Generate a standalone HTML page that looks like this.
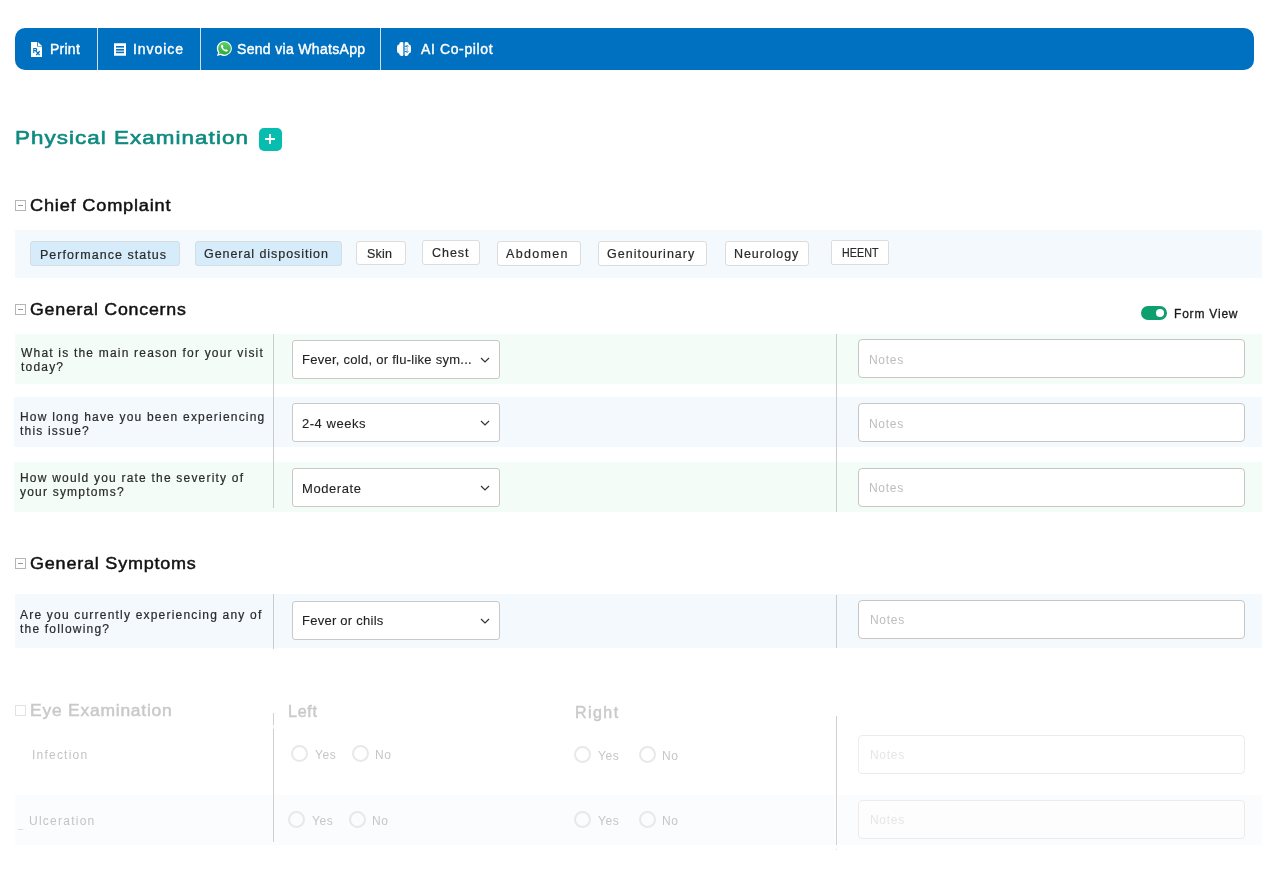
<!DOCTYPE html>
<html><head><meta charset="utf-8">
<style>
*{box-sizing:border-box;margin:0;padding:0}
html,body{width:1269px;height:893px;background:#fff;overflow:hidden;font-family:"Liberation Sans",sans-serif;position:relative}
.a{position:absolute;white-space:nowrap}
.t{position:absolute;white-space:nowrap;line-height:1;transform-origin:0 0}
/* toolbar */
#bar{position:absolute;left:15px;top:28px;width:1239px;height:42px;background:#0070c1;border-radius:10px}
.dv{position:absolute;top:28px;width:1px;height:42px;background:#d6dee9}
.bt{color:#fff;font-size:14px;font-weight:normal;-webkit-text-stroke:0.4px #fff;top:41.5px!important}
/* headings */
.h2{color:#0f8a80;font-size:19px;font-weight:normal;-webkit-text-stroke:0.6px #0f8a80}
.h3{color:#111;font-size:16px;font-weight:normal;-webkit-text-stroke:0.45px currentColor}
.box{position:absolute;width:11px;height:11px;border:1px solid #b5b5b5;background:#fff}
.box:after{content:"";position:absolute;left:2px;top:4px;width:5px;height:1px;background:#999}
/* tags */
.tagrow{position:absolute;left:15px;top:230px;width:1247px;height:48px;background:#f3f9fd}
.tag{position:absolute;height:25px;border:1px solid #dcdcdc;border-radius:3px;background:#fff}
.tag.on{background:#d6ecfb;border-color:#d4dde4}
.tg{color:#2a2a2a;font-size:12.5px;-webkit-text-stroke:0.2px #2a2a2a}
/* rows */
.row{position:absolute;height:50px;width:1248px}
.g{background:#f3fcf7}
.b{background:#f3f9fd}
.vd{position:absolute;width:1px;background:#cccccc}
.q{color:#2a2a2a;font-size:12px;letter-spacing:1.2px;-webkit-text-stroke:0.2px #2a2a2a}
.sel{position:absolute;left:292px;width:208px;height:39px;background:#fff;border:1px solid #c9c9c9;border-radius:3px}
.sv{color:#222;font-size:13px;-webkit-text-stroke:0.1px #222}
.chev{position:absolute;width:10px;height:7px}
.note{position:absolute;left:858px;width:387px;height:39px;background:#fff;border:1px solid #c6c6c6;border-radius:4px}
.nt{color:#bdbdbd;font-size:12px;letter-spacing:0.7px}
.rd{position:absolute;width:17px;height:17px;border:2px solid #e8e8e8;border-radius:50%}
.rt{color:#c6c6c6;font-size:12px;letter-spacing:0.6px}
</style></head><body><div id="root" style="position:absolute;left:0;top:0;width:1269px;height:893px;will-change:transform">

<div id="bar"></div>
<div class="dv" style="left:97px"></div>
<div class="dv" style="left:200px"></div>
<div class="dv" style="left:380px"></div>

<!-- print icon -->
<svg class="a" style="left:31px;top:42px" width="11" height="15" viewBox="0 0 11 15">
<path d="M0 0H6.1V4.6H11V15H0Z" fill="#fff"/>
<path d="M6.9 0L11 3.9H6.9Z" fill="#fff"/>
<path d="M2.2 11V5.9H4.6C5.7 5.9 6.3 6.5 6.3 7.4C6.3 8.3 5.7 8.9 4.6 8.9H3.3V11Z" fill="#0070c1"/>
<path d="M3.3 6.9V7.9H4.4C4.9 7.9 5.1 7.7 5.1 7.4C5.1 7.1 4.9 6.9 4.4 6.9Z" fill="#fff"/>
<path d="M4.5 8.6L8.6 13.1M8.7 9.3L5.2 13.1" stroke="#0070c1" stroke-width="1.3"/>
</svg>
<div class="t bt" style="left:50px;top:43px;letter-spacing:0.25px">Print</div>

<!-- invoice icon -->
<svg class="a" style="left:114px;top:43px" width="12" height="13" viewBox="0 0 12 13">
<path d="M0 0.5L1 0L2 0.5L3 0L4 0.5L5 0L6 0.5L7 0L8 0.5L9 0L10 0.5L11 0L12 0.5V12.5L11 13L10 12.5L9 13L8 12.5L7 13L6 12.5L5 13L4 12.5L3 13L2 12.5L1 13L0 12.5Z" fill="#fff"/>
<rect x="2" y="3" width="8" height="1.6" fill="#0070c1"/>
<rect x="2" y="6" width="8" height="1.6" fill="#0070c1"/>
<rect x="2" y="8.6" width="8" height="1.6" fill="#0070c1"/>
</svg>
<div class="t bt" style="left:133px;top:43px;letter-spacing:0.95px">Invoice</div>

<!-- whatsapp icon -->
<svg class="a" style="left:216px;top:40px" width="17" height="17" viewBox="0 0 17 17">
<defs><linearGradient id="wg" x1="0" y1="0" x2="0" y2="1"><stop offset="0" stop-color="#61d06a"/><stop offset="1" stop-color="#27a93a"/></linearGradient></defs>
<path d="M8.5 0.9A7.5 7.5 0 1 1 4.6 14.9L1 16L2.1 12.5A7.5 7.5 0 0 1 8.5 0.9Z" fill="#fff"/>
<path d="M8.5 2.1A6.3 6.3 0 1 1 5 13.6L2.8 14.3L3.5 12.2A6.3 6.3 0 0 1 8.5 2.1Z" fill="url(#wg)"/>
<path d="M5.6 5C6 4.6 6.6 4.8 6.7 5.1L7.3 6.5C7.4 6.8 7.1 7.1 6.9 7.4C7.4 8.4 8.3 9.3 9.3 9.8C9.6 9.6 9.9 9.2 10.2 9.3L11.6 10C11.9 10.2 11.9 10.6 11.6 11C11.1 11.6 10.3 11.8 9.5 11.5C7.6 10.8 6 9.2 5.2 7.2C4.9 6.4 5 5.6 5.6 5Z" fill="#fff"/>
</svg>
<div class="t bt" style="left:237px;top:43px;letter-spacing:0.32px">Send via WhatsApp</div>

<!-- brain icon -->
<svg class="a" style="left:397px;top:42px" width="14" height="14" viewBox="0 0 14 14">
<defs><clipPath id="cl"><rect x="0" y="0" width="6" height="14"/></clipPath><clipPath id="cr"><rect x="8" y="0" width="6" height="14"/></clipPath></defs>
<g clip-path="url(#cl)" fill="#fff"><circle cx="4.6" cy="2.4" r="2.4"/><circle cx="2.3" cy="4.9" r="2.3"/><circle cx="2.3" cy="9.1" r="2.3"/><circle cx="4.6" cy="11.6" r="2.4"/><rect x="2.3" y="2.4" width="4" height="9.2"/><rect x="0" y="4.9" width="3" height="4.2"/></g>
<g clip-path="url(#cr)" fill="#fff"><circle cx="9.4" cy="2.4" r="2.4"/><circle cx="11.7" cy="4.9" r="2.3"/><circle cx="11.7" cy="9.1" r="2.3"/><circle cx="9.4" cy="11.6" r="2.4"/><rect x="7.7" y="2.4" width="4" height="9.2"/><rect x="11" y="4.9" width="3" height="4.2"/></g>
<rect x="6" y="0.6" width="2" height="12.8" fill="#fff" opacity="0.35"/>
<path d="M8 4.3H9.6M8 9.6H9.6" stroke="#0070c1" stroke-width="1"/>
<circle cx="10.2" cy="4.3" r="0.9" fill="none" stroke="#0070c1" stroke-width="0.7"/>
<circle cx="10.2" cy="9.6" r="0.9" fill="none" stroke="#0070c1" stroke-width="0.7"/>
<rect x="8" y="6.4" width="3.2" height="1.2" fill="#0070c1" opacity="0.5"/>
</svg>
<div class="t bt" style="left:421px;top:43px;letter-spacing:0.62px">AI Co-pilot</div>

<!-- heading -->
<div class="t h2" style="left:15px;top:128px;letter-spacing:0.9px;transform:scaleX(1.178)">Physical Examination</div>
<div class="a" style="left:258.5px;top:127.5px;width:23px;height:23px;background:#07bdb0;border-radius:5px"></div>
<div class="a" style="left:265px;top:138px;width:10px;height:2px;background:#fff"></div>
<div class="a" style="left:269px;top:134px;width:2px;height:10px;background:#fff"></div>

<!-- chief complaint -->
<div class="box" style="left:15px;top:200px"></div>
<div class="t h3" style="left:30px;top:198px;letter-spacing:0.7px;transform:scaleX(1.137)">Chief Complaint</div>

<div class="tagrow"></div>
<div class="tag on" style="left:30px;top:241px;width:150px"></div>
<div class="t tg" style="left:40px;top:249px;letter-spacing:1.03px">Performance status</div>
<div class="tag on" style="left:195px;top:241px;width:147px"></div>
<div class="t tg" style="left:204px;top:248px;letter-spacing:0.94px">General disposition</div>
<div class="tag" style="left:356px;top:241px;width:50px;height:24px"></div>
<div class="t tg" style="left:367px;top:248px;letter-spacing:0.25px">Skin</div>
<div class="tag" style="left:422px;top:240px;width:58px;height:25px"></div>
<div class="t tg" style="left:432px;top:247px;letter-spacing:0.96px">Chest</div>
<div class="tag" style="left:497px;top:241px;width:84px"></div>
<div class="t tg" style="left:506px;top:248px;letter-spacing:1.33px">Abdomen</div>
<div class="tag" style="left:598px;top:241px;width:109px"></div>
<div class="t tg" style="left:607px;top:248px;letter-spacing:1.02px">Genitourinary</div>
<div class="tag" style="left:725px;top:241px;width:84px"></div>
<div class="t tg" style="left:734px;top:248px;letter-spacing:0.91px">Neurology</div>
<div class="tag" style="left:831px;top:240px;width:58px;height:25px;border-radius:2px"></div>
<div class="t tg" style="left:841.5px;top:247px;font-size:12px;letter-spacing:0.1px;transform:scaleX(0.89)">HEENT</div>

<!-- general concerns -->
<div class="box" style="left:15px;top:304px"></div>
<div class="t h3" style="left:30px;top:302px;letter-spacing:0.7px;transform:scaleX(1.11)">General Concerns</div>
<div class="a" style="left:1141px;top:306px;width:26px;height:14px;background:#0e9f6e;border-radius:7px"></div>
<div class="a" style="left:1156px;top:309px;width:8px;height:8px;background:#fff;border-radius:50%"></div>
<div class="t" style="left:1174px;top:307.5px;font-size:12px;color:#1a1a1a;letter-spacing:0.8px;-webkit-text-stroke:0.3px #1a1a1a">Form View</div>

<div class="row g" style="left:15px;top:334px;width:1247px"></div>
<div class="row b" style="left:14px;top:397px"></div>
<div class="row g" style="left:14px;top:462px"></div>
<div class="vd" style="left:273px;top:334px;height:174px"></div>
<div class="vd" style="left:836px;top:334px;height:178px"></div>

<div class="t q" style="left:21px;top:346px;line-height:14px">What is the main reason for your visit<br>today?</div>
<div class="sel" style="top:340px"></div>
<div class="t sv" style="left:302px;top:353px;letter-spacing:0.26px">Fever, cold, or flu-like sym...</div>
<svg class="chev" style="left:479.5px;top:356.5px" viewBox="0 0 10 7"><path d="M1 1L5 5L9 1" fill="none" stroke="#333" stroke-width="1.2"/></svg>
<div class="note" style="top:339px"></div>
<div class="t nt" style="left:869px;top:353.5px">Notes</div>

<div class="t q" style="left:20px;top:411px;line-height:13.5px">How long have you been experiencing<br>this issue?</div>
<div class="sel" style="top:403px"></div>
<div class="t sv" style="left:302px;top:416.5px;letter-spacing:0.52px">2-4 weeks</div>
<svg class="chev" style="left:479.5px;top:419.5px" viewBox="0 0 10 7"><path d="M1 1L5 5L9 1" fill="none" stroke="#333" stroke-width="1.2"/></svg>
<div class="note" style="top:403px"></div>
<div class="t nt" style="left:869px;top:417.5px">Notes</div>

<div class="t q" style="left:20px;top:472px;line-height:13.7px">How would you rate the severity of<br>your symptoms?</div>
<div class="sel" style="top:468px"></div>
<div class="t sv" style="left:302px;top:481.5px;letter-spacing:0.58px">Moderate</div>
<svg class="chev" style="left:479.5px;top:484.5px" viewBox="0 0 10 7"><path d="M1 1L5 5L9 1" fill="none" stroke="#333" stroke-width="1.2"/></svg>
<div class="note" style="top:468px"></div>
<div class="t nt" style="left:869px;top:482px">Notes</div>

<!-- general symptoms -->
<div class="box" style="left:15px;top:558px"></div>
<div class="t h3" style="left:30px;top:556px;letter-spacing:0.7px;transform:scaleX(1.125)">General Symptoms</div>
<div class="row b" style="left:15px;top:594px;height:54px;width:1247px"></div>
<div class="vd" style="left:273px;top:594px;height:55px"></div>
<div class="vd" style="left:836px;top:595px;height:53px"></div>
<div class="t q" style="left:20px;top:607.5px;line-height:14px">Are you currently experiencing any of<br>the following?</div>
<div class="sel" style="top:601px"></div>
<div class="t sv" style="left:302px;top:614px;letter-spacing:0.25px">Fever or chils</div>
<svg class="chev" style="left:479.5px;top:617.5px" viewBox="0 0 10 7"><path d="M1 1L5 5L9 1" fill="none" stroke="#333" stroke-width="1.2"/></svg>
<div class="note" style="top:600px"></div>
<div class="t nt" style="left:870px;top:614px">Notes</div>

<!-- eye examination (faded) -->
<div class="a" style="left:15px;top:705px;width:11px;height:11px;border:1px solid #e2e2e2"></div>
<div class="t h3" style="left:30px;top:703px;letter-spacing:0.7px;transform:scaleX(1.092);color:#c9c9c9">Eye Examination</div>
<div class="t h3" style="left:288px;top:703.5px;letter-spacing:0.75px;color:#c9c9c9">Left</div>
<div class="t h3" style="left:575px;top:705px;letter-spacing:1.45px;color:#c9c9c9">Right</div>
<div class="a" style="left:15px;top:795px;width:1247px;height:50px;background:#fbfcfe"></div>
<div class="vd" style="left:273px;top:713px;height:129px;background:#d0d0d0"></div>
<div class="vd" style="left:836px;top:716px;height:129px;background:#d0d0d0"></div>
<div class="a" style="left:835px;top:795px;width:3px;height:50px;background:#fff"></div><div class="vd" style="left:836px;top:795px;height:50px;background:#d0d0d0"></div>
<div class="a" style="left:836px;top:849px;width:1px;height:1px;background:#ddd"></div>
<div class="a" style="left:273px;top:725px;width:1px;height:4px;background:#f0f3f1"></div>
<div class="t" style="left:32px;top:749px;font-size:12px;color:#c4c4c4;letter-spacing:1.22px">Infection</div>
<div class="t" style="left:29px;top:815px;font-size:12px;color:#c4c4c4;letter-spacing:1.25px">Ulceration</div>
<div class="a" style="left:18px;top:829px;width:5px;height:1px;background:#ddd"></div>
<div class="rd" style="left:291px;top:745px"></div><div class="t rt" style="left:315px;top:749px">Yes</div>
<div class="rd" style="left:352px;top:745px"></div><div class="t rt" style="left:375px;top:749px">No</div>
<div class="rd" style="left:574px;top:746px"></div><div class="t rt" style="left:598px;top:750px">Yes</div>
<div class="rd" style="left:639px;top:746px"></div><div class="t rt" style="left:662px;top:750px">No</div>
<div class="rd" style="left:288px;top:811px"></div><div class="t rt" style="left:312px;top:815px">Yes</div>
<div class="rd" style="left:349px;top:811px"></div><div class="t rt" style="left:372px;top:815px">No</div>
<div class="rd" style="left:574px;top:811px"></div><div class="t rt" style="left:598px;top:815px">Yes</div>
<div class="rd" style="left:639px;top:811px"></div><div class="t rt" style="left:662px;top:815px">No</div>
<div class="a" style="left:858px;top:735px;width:387px;height:39px;border:1px solid #ececec;border-radius:4px;background:#fff"></div>
<div class="t nt" style="left:870px;top:749px;color:#e6e6e6">Notes</div>
<div class="a" style="left:858px;top:800px;width:387px;height:39px;border:1px solid #ececec;border-radius:4px;background:#fdfdfe"></div>
<div class="t nt" style="left:870px;top:814px;color:#e6e6e6">Notes</div>
</div></body></html>
